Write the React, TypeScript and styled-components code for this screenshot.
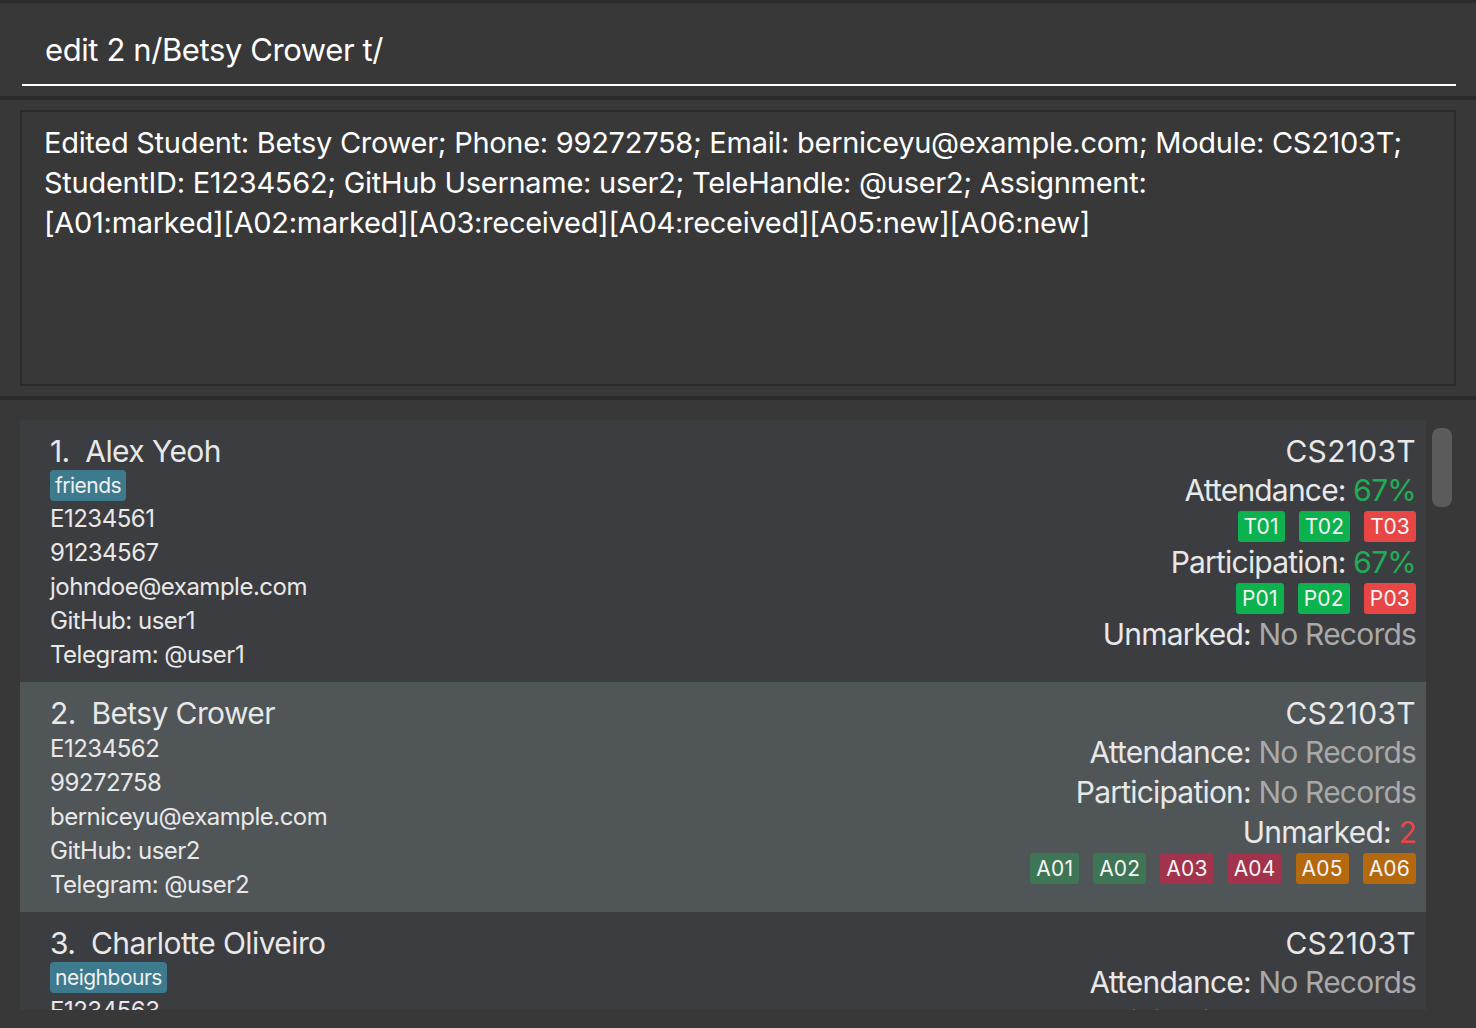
import React from "react";
import styled, { createGlobalStyle } from "styled-components";

const GlobalStyle = createGlobalStyle`
  html, body { margin: 0; padding: 0; background: #383838; }
  body { font-family: Inter, "Noto Sans", sans-serif; -webkit-font-smoothing: antialiased; }
  * { box-sizing: border-box; }
`;

const Page = styled.div`
  width: 1476px;
  height: 1028px;
  display: flex;
  flex-direction: column;
  background: #383838;
  border-top: 3px solid #2b2b2b;
  overflow: hidden;
`;

const CommandSection = styled.div`
  padding: 0 20px 0 22px;
  height: 93px;
  display: flex;
  align-items: flex-start;
`;

const CommandInput = styled.div`
  width: 1434px;
  height: 83px;
  border-bottom: 2px solid #ffffff;
  color: #ffffff;
  font-size: 31px;
  letter-spacing: -0.4px;
  padding: 27px 0 0 23px;
  line-height: 40px;
`;

const Separator = styled.div`
  height: 4px;
  background: #2b2b2b;
  flex: none;
`;

const ResultSection = styled.div`
  padding: 10px 20px 10px 20px;
  flex: none;
`;

const ResultBox = styled.div`
  height: 276px;
  border: 2px solid #2b2b2b;
  color: #ffffff;
  font-size: 29px;
  letter-spacing: -0.28px;
  line-height: 40px;
  padding: 11px 10px 0 22px;
  white-space: nowrap;
`;

const ListSection = styled.div`
  flex: 1;
  display: flex;
  padding: 20px 0 18px 20px;
  min-height: 0;
`;

const Viewport = styled.div`
  width: 1406px;
  overflow: hidden;
  display: flex;
  flex-direction: column;
`;

const Track = styled.div`
  width: 50px;
  padding: 8px 0 0 6px;
`;

const Thumb = styled.div`
  width: 20px;
  height: 79px;
  border-radius: 8px;
  background: #5b5b5b;
`;

const Card = styled.div<{ $selected?: boolean }>`
  flex: none;
  display: flex;
  justify-content: space-between;
  background: ${(p) => (p.$selected ? "#505558" : "#3c3d40")};
  padding: 12px 10px 10px 30px;
  color: #e8e8e8;
`;

const LeftCol = styled.div`
  display: flex;
  flex-direction: column;
  align-items: flex-start;
`;

const Name = styled.div`
  font-size: 30px;
  line-height: 38px;
  letter-spacing: -0.6px;
  white-space: pre;
`;

const Tag = styled.span`
  display: inline-block;
  background: #3d7a8d;
  color: #f0f0f0;
  font-size: 21px;
  line-height: 31px;
  height: 31px;
  padding: 0 5px;
  border-radius: 4px;
  margin-bottom: 1px;
  letter-spacing: -0.5px;
`;

const Detail = styled.div`
  font-size: 24px;
  line-height: 34px;
  letter-spacing: -0.5px;
`;

const RightCol = styled.div`
  display: flex;
  flex-direction: column;
  align-items: flex-end;
`;

const Module = styled.div`
  font-size: 30px;
  line-height: 38px;
  letter-spacing: 0.3px;
`;

const Stat = styled.div`
  font-size: 30px;
  line-height: 40px;
  letter-spacing: -0.8px;
  white-space: pre;
`;

const Value = styled.span<{ $tone: "green" | "grey" | "red" }>`
  color: ${(p) =>
    p.$tone === "green" ? "#1fae55" : p.$tone === "red" ? "#e84545" : "#a9a9a9"};
`;

const BadgeRow = styled.div`
  display: flex;
  gap: 14px;
  height: 31px;
  margin-top: 1px;
`;

const badgeColors: Record<string, string> = {
  green: "#0cb24e",
  red: "#e84545",
  done: "#3e7554",
  received: "#a1334c",
  new: "#b4690e",
};

const Badge = styled.span<{ $kind: string }>`
  display: inline-block;
  background: ${(p) => badgeColors[p.$kind]};
  color: #f4f4f4;
  font-size: 21px;
  line-height: 31px;
  height: 31px;
  padding: 0 6px;
  border-radius: 3px;
  letter-spacing: 0.2px;
`;

export default function App() {
  return (
    <>
      <GlobalStyle />
      <Page>
        <CommandSection>
          <CommandInput>edit 2 n/Betsy Crower t/</CommandInput>
        </CommandSection>
        <Separator />
        <ResultSection>
          <ResultBox>
            Edited Student: Betsy Crower; Phone: 99272758; Email: berniceyu@example.com; Module: CS2103T;
            <br />
            StudentID: E1234562; GitHub Username: user2; TeleHandle: @user2; Assignment:
            <br />
            [A01:marked][A02:marked][A03:received][A04:received][A05:new][A06:new]
          </ResultBox>
        </ResultSection>
        <Separator />
        <ListSection>
          <Viewport>
            <Card>
              <LeftCol>
                <Name>{"1.  Alex Yeoh"}</Name>
                <Tag>friends</Tag>
                <Detail>E1234561</Detail>
                <Detail>91234567</Detail>
                <Detail>johndoe@example.com</Detail>
                <Detail>GitHub: user1</Detail>
                <Detail>Telegram: @user1</Detail>
              </LeftCol>
              <RightCol>
                <Module>CS2103T</Module>
                <Stat>
                  Attendance: <Value $tone="green">67%</Value>
                </Stat>
                <BadgeRow>
                  <Badge $kind="green">T01</Badge>
                  <Badge $kind="green">T02</Badge>
                  <Badge $kind="red">T03</Badge>
                </BadgeRow>
                <Stat>
                  Participation: <Value $tone="green">67%</Value>
                </Stat>
                <BadgeRow>
                  <Badge $kind="green">P01</Badge>
                  <Badge $kind="green">P02</Badge>
                  <Badge $kind="red">P03</Badge>
                </BadgeRow>
                <Stat>
                  Unmarked: <Value $tone="grey">No Records</Value>
                </Stat>
              </RightCol>
            </Card>
            <Card $selected>
              <LeftCol>
                <Name>{"2.  Betsy Crower"}</Name>
                <Detail>E1234562</Detail>
                <Detail>99272758</Detail>
                <Detail>berniceyu@example.com</Detail>
                <Detail>GitHub: user2</Detail>
                <Detail>Telegram: @user2</Detail>
              </LeftCol>
              <RightCol>
                <Module>CS2103T</Module>
                <Stat>
                  Attendance: <Value $tone="grey">No Records</Value>
                </Stat>
                <Stat>
                  Participation: <Value $tone="grey">No Records</Value>
                </Stat>
                <Stat>
                  Unmarked: <Value $tone="red">2</Value>
                </Stat>
                <BadgeRow>
                  <Badge $kind="done">A01</Badge>
                  <Badge $kind="done">A02</Badge>
                  <Badge $kind="received">A03</Badge>
                  <Badge $kind="received">A04</Badge>
                  <Badge $kind="new">A05</Badge>
                  <Badge $kind="new">A06</Badge>
                </BadgeRow>
              </RightCol>
            </Card>
            <Card>
              <LeftCol>
                <Name>{"3.  Charlotte Oliveiro"}</Name>
                <Tag>neighbours</Tag>
                <Detail>E1234563</Detail>
                <Detail>93210283</Detail>
                <Detail>charlotte@example.com</Detail>
              </LeftCol>
              <RightCol>
                <Module>CS2103T</Module>
                <Stat>
                  Attendance: <Value $tone="grey">No Records</Value>
                </Stat>
                <Stat>
                  Participation: <Value $tone="grey">No Records</Value>
                </Stat>
              </RightCol>
            </Card>
          </Viewport>
          <Track>
            <Thumb />
          </Track>
        </ListSection>
      </Page>
    </>
  );
}
